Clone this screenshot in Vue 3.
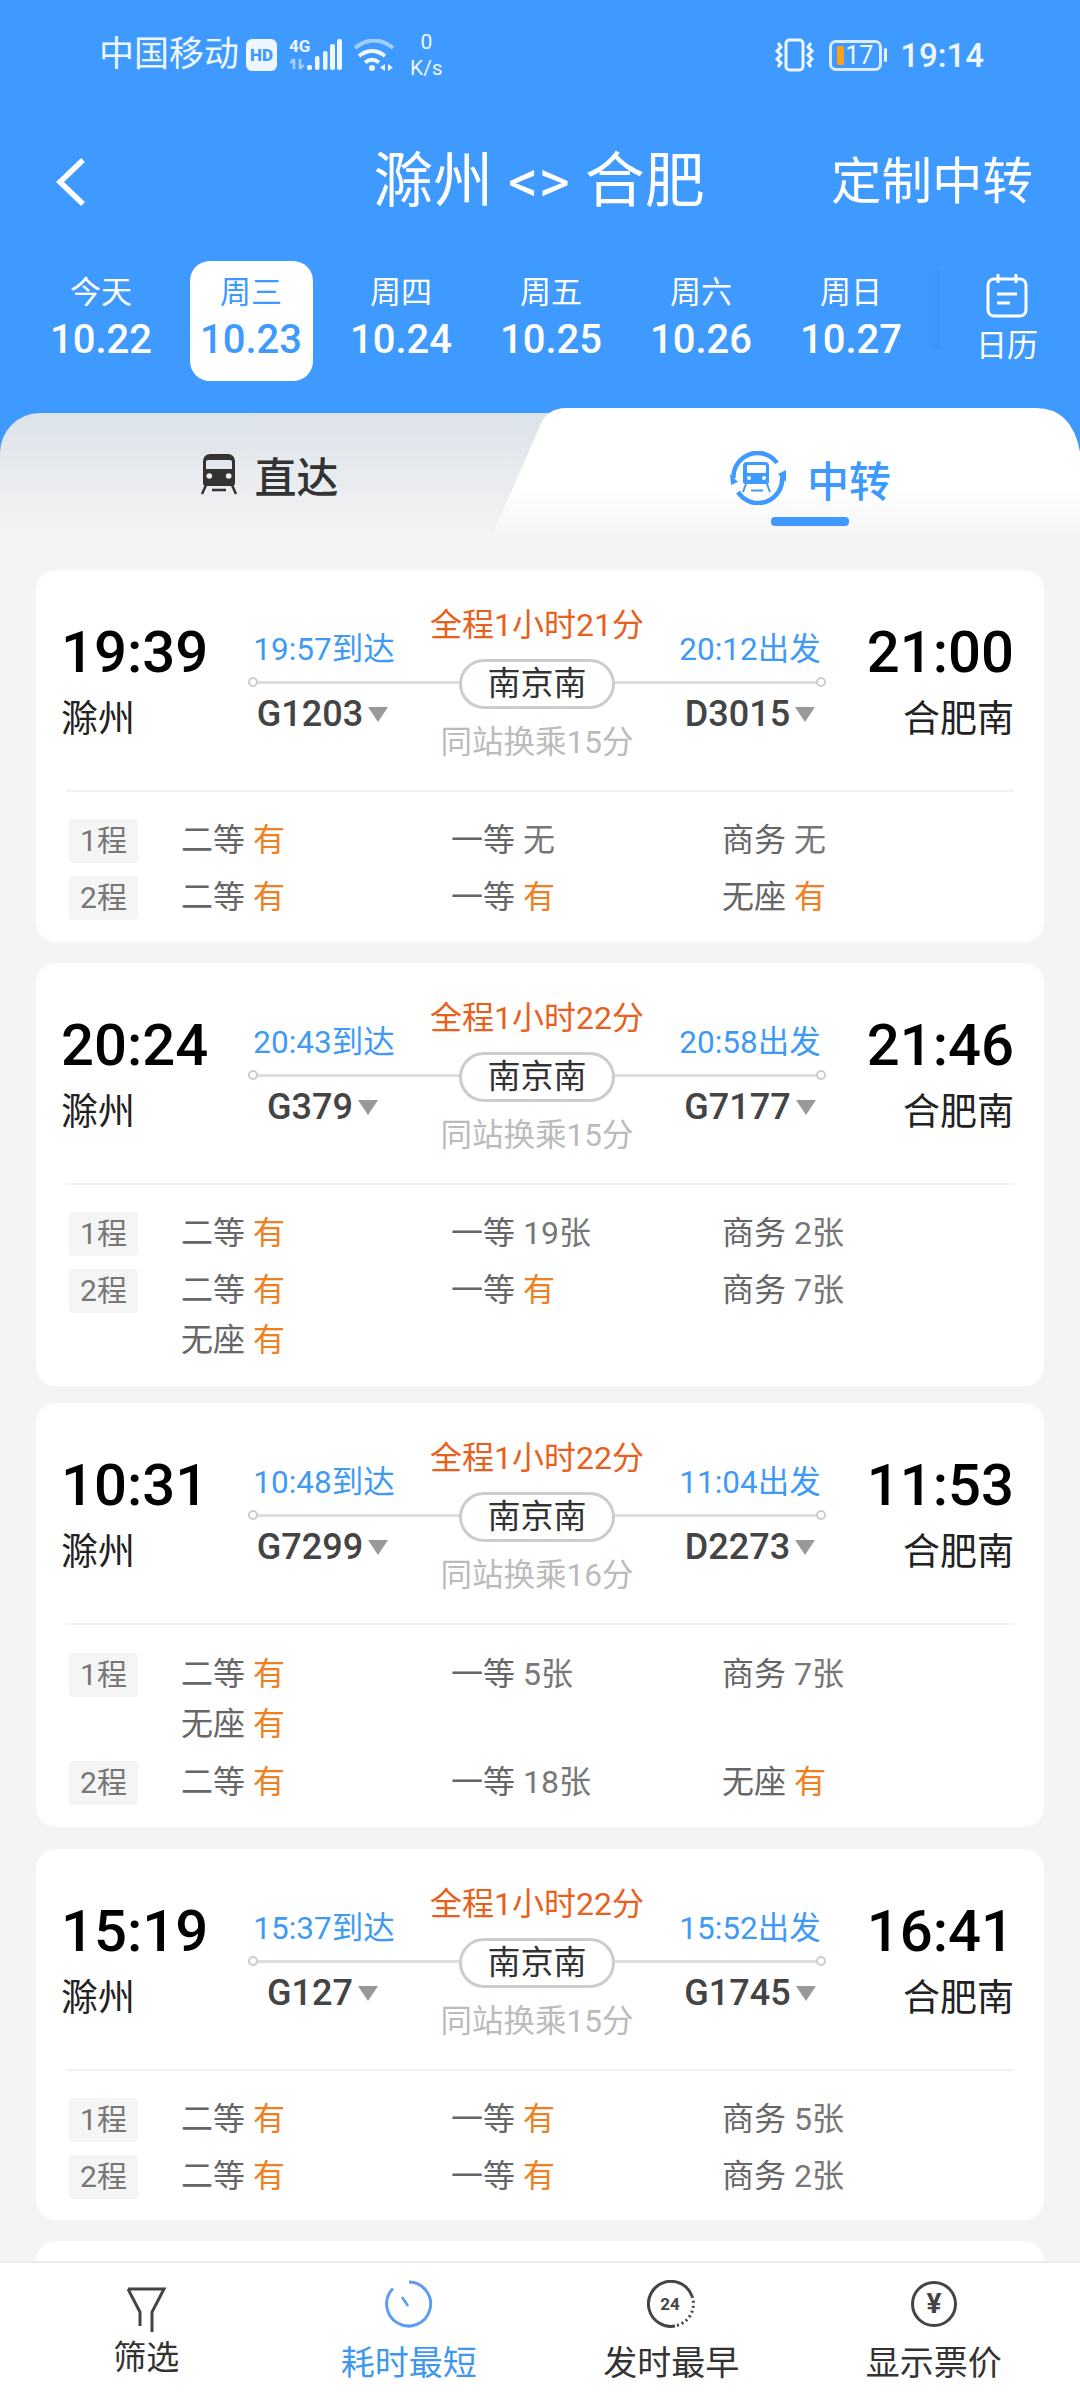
<template>
  <div class="page">
    <header class="top">
      <div class="status">
        <div class="status-left">
          <span class="carrier">中国移动</span>
          <span class="hd">HD</span>
          <svg class="signal" width="54" height="36" viewBox="0 -4 54 36">
            <text x="0" y="13" class="net-text">4G</text>
            <path d="M5 30V20M5 20l-3.500 4M11 20v10M11 30l3.500-4" stroke="#a9d2fe" stroke-width="2.500" fill="none" />
            <rect x="18" y="26" width="5" height="5" rx="2" fill="#eef6ff" />
            <rect x="26" y="17" width="4.500" height="14" rx="2" fill="#eef6ff" />
            <rect x="34" y="12" width="4.500" height="19" rx="2" fill="#eef6ff" />
            <rect x="41" y="5" width="5" height="26" rx="2" fill="#eef6ff" />
            <rect x="48" y="0" width="5" height="31" rx="2" fill="#eef6ff" />
          </svg>
          <svg class="wifi" width="40" height="32" viewBox="0 0 40 32">
            <path d="M1 9Q20 -6 39 9" stroke="#9fcdfe" stroke-width="4" fill="none" />
            <path d="M5 17Q18 7 31 17" stroke="#eef6ff" stroke-width="4" fill="none" />
            <path d="M11 23.500Q18 18 25 23.500" stroke="#eef6ff" stroke-width="4" fill="none" />
            <circle cx="18" cy="29" r="3" fill="#eef6ff" />
            <path d="M31 25v7l-5-3.500zM34 25v7l5-3.500z" fill="#eef6ff" />
          </svg>
          <span class="speed"><b>0</b><i>K/s</i></span>
        </div>
        <div class="status-right">
          <svg width="42" height="34" viewBox="0 0 42 34">
            <rect x="12" y="2" width="17" height="30" rx="3.500" stroke="#eef6ff" stroke-width="3" fill="none" />
            <path d="M4 5l3 4-4 4 4 4-4 4 4 4-3 4M37 5l-3 4 4 4-4 4 4 4-4 4 3 4" stroke="#eef6ff" stroke-width="3" fill="none" />
          </svg>
          <span class="battery"><i class="battery-level"></i><em>17</em></span>
          <span class="battery-nub"></span>
          <span class="clock">19:14</span>
        </div>
      </div>

      <nav class="nav">
        <div>
          <svg class="back" width="32" height="50" viewBox="0 0 32 50">
            <path d="M28 3L5 25l23 22" stroke="#fff" stroke-width="5.500" fill="none" />
          </svg>
        </div>
        <div class="title">滁州 &lt;&gt; 合肥</div>
        <div class="action">定制中转</div>
      </nav>

      <div class="dates">
        <div v-for="d in dates" :key="d.date" class="date" :class="{ 'date--on': d.on }">
          <span class="date-week">{{ d.week }}</span>
          <span class="date-num">{{ d.date }}</span>
        </div>
        <div class="calendar">
          <svg width="44" height="44" viewBox="0 0 44 44">
            <rect x="3" y="5" width="38" height="37" rx="6" stroke="#fff" stroke-width="3" fill="none" />
            <path d="M13 0v9M31 0v9M12 20h20M12 29h13" stroke="#fff" stroke-width="3" fill="none" />
          </svg>
          <span>日历</span>
        </div>
      </div>

      <div class="tabs">
        <div class="tab">
          <svg width="36" height="42" viewBox="0 0 36 42">
            <path d="M9 0h18a7 7 0 0 1 7 7v22a3 3 0 0 1-3 3H5a3 3 0 0 1-3-3V7a7 7 0 0 1 7-7z" fill="#333" />
            <path d="M7 6h22a2 2 0 0 1 2 2v7H5V8a2 2 0 0 1 2-2z" fill="#e4e8ee" />
            <circle cx="8.300" cy="22" r="2.800" fill="#eef1f4" />
            <circle cx="27.700" cy="22" r="2.800" fill="#eef1f4" />
            <path d="M5 31L1 40M31 31l4 9M11 36h14" stroke="#333" stroke-width="2.500" fill="none" />
          </svg>
          <span>直达</span>
        </div>
        <div class="tab-on">
          <div class="tab-on-row">
            <svg width="58" height="54" viewBox="0 0 58 54">
              <path d="M4.500 27A24 24 0 0 1 48 12M53 25A24 24 0 0 1 9 41" stroke="#3e9afe" stroke-width="4.500" fill="none" />
              <path d="M1 23l8 8-7 3zM57 31l-8-8 8-4z" fill="#3e9afe" />
              <path d="M18 11h18a4 4 0 0 1 4 4v16a2 2 0 0 1-2 2H16a2 2 0 0 1-2-2V15a4 4 0 0 1 4-4z" fill="#3e9afe" />
              <rect x="18" y="14" width="19" height="8" rx="1" fill="#fff" />
              <circle cx="20" cy="27" r="2" fill="#fff" />
              <circle cx="35" cy="27" r="2" fill="#fff" />
              <path d="M17 33l-3 8M38 33l3 8M22 39.500h12" stroke="#3e9afe" stroke-width="2" fill="none" />
            </svg>
            <span>中转</span>
          </div>
          <i class="tab-bar"></i>
        </div>
      </div>
    </header>

    <main class="list">
      <section v-for="c in cards" :key="c.dep" class="card">
        <div class="route">
          <div class="side">
            <div class="time">{{ c.dep }}</div>
            <div class="station">滁州</div>
          </div>
          <div class="leg leg--a">
            <div class="leg-text">{{ c.arrive }}</div>
            <div class="leg-line"></div>
            <div class="train">{{ c.trainA }}<i class="caret"></i></div>
          </div>
          <div class="hub">
            <div class="total">{{ c.total }}</div>
            <div class="pill">南京南</div>
            <div class="change">{{ c.change }}</div>
          </div>
          <div class="leg leg--b">
            <div class="leg-text">{{ c.leave }}</div>
            <div class="leg-line"></div>
            <div class="train">{{ c.trainB }}<i class="caret"></i></div>
          </div>
          <div class="side side--end">
            <div class="time">{{ c.arr }}</div>
            <div class="station">合肥南</div>
          </div>
        </div>
        <div class="seats">
          <div v-for="g in c.groups" :key="g.label" class="group">
            <span class="badge">{{ g.label }}</span>
            <div class="seat-grid">
              <span v-for="s in g.seats" :key="s[0]" class="seat">
                {{ s[0] }} <b :class="{ hot: s[1] === '有' }">{{ s[1] }}</b>
              </span>
            </div>
          </div>
        </div>
      </section>
      <section class="card card--cut"></section>
    </main>

    <footer class="bottom">
      <div class="bottom-item bottom-item--filter">
        <svg width="42" height="46" viewBox="0 0 42 46">
          <path d="M3 2h36L27 25v20M3 2l12 23v14" stroke="#444" stroke-width="3" fill="none" />
        </svg>
        <span>筛选</span>
      </div>
      <div class="bottom-item bottom-item--on">
        <svg width="48" height="48" viewBox="0 0 48 48">
          <path d="M24 2a22 22 0 1 1-16 6.500" stroke="#5c9cf2" stroke-width="3" fill="none" />
          <path d="M17 17l6 9" stroke="#5c9cf2" stroke-width="2.500" fill="none" />
        </svg>
        <span>耗时最短</span>
      </div>
      <div class="bottom-item">
        <svg width="48" height="48" viewBox="0 0 48 48">
          <path d="M45 16A22.500 22.500 0 1 0 28 46" stroke="#444" stroke-width="3" fill="none" />
          <path d="M45 16A22.500 22.500 0 0 1 28 46" stroke="#444" stroke-width="3" stroke-dasharray="2 3" fill="none" />
          <text x="23" y="30" text-anchor="middle" class="icon-text">24</text>
        </svg>
        <span>发时最早</span>
      </div>
      <div class="bottom-item">
        <svg width="48" height="48" viewBox="0 0 48 48">
          <circle cx="24" cy="24" r="21.500" stroke="#444" stroke-width="3" fill="none" />
          <text x="24" y="33" text-anchor="middle" class="icon-text icon-text--yen">¥</text>
        </svg>
        <span>显示票价</span>
      </div>
    </footer>
  </div>
</template>

<script setup>
const dates = [
  { week: '今天', date: '10.22' },
  { week: '周三', date: '10.23', on: true },
  { week: '周四', date: '10.24' },
  { week: '周五', date: '10.25' },
  { week: '周六', date: '10.26' },
  { week: '周日', date: '10.27' }
]

const cards = [
  {
    dep: '19:39', arr: '21:00', arrive: '19:57到达', leave: '20:12出发',
    total: '全程1小时21分', change: '同站换乘15分', trainA: 'G1203', trainB: 'D3015',
    groups: [
      { label: '1程', seats: [['二等', '有'], ['一等', '无'], ['商务', '无']] },
      { label: '2程', seats: [['二等', '有'], ['一等', '有'], ['无座', '有']] }
    ]
  },
  {
    dep: '20:24', arr: '21:46', arrive: '20:43到达', leave: '20:58出发',
    total: '全程1小时22分', change: '同站换乘15分', trainA: 'G379', trainB: 'G7177',
    groups: [
      { label: '1程', seats: [['二等', '有'], ['一等', '19张'], ['商务', '2张']] },
      { label: '2程', seats: [['二等', '有'], ['一等', '有'], ['商务', '7张'], ['无座', '有']] }
    ]
  },
  {
    dep: '10:31', arr: '11:53', arrive: '10:48到达', leave: '11:04出发',
    total: '全程1小时22分', change: '同站换乘16分', trainA: 'G7299', trainB: 'D2273',
    groups: [
      { label: '1程', seats: [['二等', '有'], ['一等', '5张'], ['商务', '7张'], ['无座', '有']] },
      { label: '2程', seats: [['二等', '有'], ['一等', '18张'], ['无座', '有']] }
    ]
  },
  {
    dep: '15:19', arr: '16:41', arrive: '15:37到达', leave: '15:52出发',
    total: '全程1小时22分', change: '同站换乘15分', trainA: 'G127', trainB: 'G1745',
    groups: [
      { label: '1程', seats: [['二等', '有'], ['一等', '有'], ['商务', '5张']] },
      { label: '2程', seats: [['二等', '有'], ['一等', '有'], ['商务', '2张']] }
    ]
  }
]
</script>

<style>
html,
body {
  background: #f4f4f4;
}
</style>

<style scoped>
.page {
  display: flex;
  flex-direction: column;
  width: 1080px;
  height: 2400px;
  overflow: hidden;
  background: #f4f4f4;
  font-family: Roboto, "Noto Sans CJK SC", sans-serif;
  color: #333;
}

.top {
  flex: none;
  background: #3e9afe;
  color: #fff;
}
.status {
  display: flex;
  justify-content: space-between;
  align-items: center;
  height: 110px;
  padding: 0 96px 0 99px;
  color: #eef6ff;
}
.status-left,
.status-right {
  display: flex;
  align-items: center;
}
.carrier {
  font-size: 35px;
  line-height: 40px;
}
.hd {
  width: 31px;
  height: 32px;
  margin-left: 7px;
  border-radius: 6px;
  background: #eef6ff;
  color: #3e9afe;
  font-size: 17px;
  font-weight: 900;
  line-height: 32px;
  text-align: center;
}
.signal {
  margin: -4px 0 0 12px;
}
.net-text {
  font-size: 17px;
  font-weight: 700;
  fill: #eef6ff;
}
.wifi {
  margin-left: 11px;
}
.speed {
  display: flex;
  flex-direction: column;
  align-items: center;
  margin-left: 16px;
  font-size: 21px;
  line-height: 26px;
}
.speed b,
.speed i {
  font-style: normal;
  font-weight: 400;
}
.battery {
  display: flex;
  align-items: center;
  width: 53px;
  height: 31px;
  margin-left: 13px;
  padding-left: 5px;
  box-sizing: border-box;
  border: 3px solid #dbeafe;
  border-radius: 7px;
}
.battery-level {
  width: 7px;
  height: 19px;
  border-radius: 2px;
  background: #ff9f1c;
}
.battery em {
  margin-left: 1px;
  font-size: 25px;
  font-style: normal;
  line-height: 25px;
}
.battery-nub {
  width: 3px;
  height: 14px;
  margin-left: 2px;
  border-radius: 2px;
  background: #eef6ff;
}
.clock {
  margin-left: 13px;
  font-size: 33px;
  font-weight: 500;
}

.nav {
  display: grid;
  grid-template-columns: 1fr auto 1fr;
  align-items: center;
  height: 144px;
  padding: 0 47px 0 55px;
}
.back {
  display: block;
}
.title {
  margin-right: 10px;
  font-size: 60px;
  line-height: 70px;
}
.action {
  font-size: 50.500px;
  line-height: 70px;
  text-align: right;
}

.dates {
  display: flex;
  height: 120px;
  padding: 7px 0 0 26px;
}
.date {
  display: flex;
  flex-direction: column;
  align-items: center;
  width: 150px;
  height: 120px;
  box-sizing: border-box;
  padding-top: 11px;
}
.date--on {
  width: 123px;
  margin: 0 13.500px;
  border-radius: 20px;
  background: #fff;
  color: #3e9afe;
}
.date-week {
  font-size: 31px;
  line-height: 42px;
}
.date-num {
  font-size: 40px;
  font-weight: 500;
  line-height: 52px;
}
.calendar {
  position: relative;
  display: flex;
  flex-direction: column;
  align-items: center;
  width: 146px;
  margin-left: 4px;
  padding: 13px 0 0 8px;
  box-sizing: border-box;
  font-size: 31px;
  line-height: 42px;
}
.calendar::before {
  content: "";
  position: absolute;
  top: 9px;
  left: -4px;
  width: 14px;
  height: 80px;
  background: linear-gradient(90deg, rgba(40, 110, 190, 0), rgba(40, 110, 190, 0.12));
}
.calendar span {
  margin-top: 7px;
}

.tabs {
  display: flex;
  height: 132px;
  margin-top: 27px;
  color: #333;
}
.tab {
  display: flex;
  justify-content: center;
  align-items: center;
  gap: 17px;
  flex: none;
  width: 560px;
  height: 127px;
  margin-top: 5px;
  padding: 0 20px 4px 0;
  box-sizing: border-box;
  border-radius: 40px 0 0 0;
  background: linear-gradient(180deg, #dde3eb, #f4f4f4);
  font-size: 42px;
  font-weight: 500;
}
.tab-on {
  display: flex;
  flex-direction: column;
  align-items: center;
  flex: none;
  width: 590px;
  margin-left: -70px;
  padding: 43px 0 0 50px;
  box-sizing: border-box;
  background: linear-gradient(180deg, #fff 60%, #f4f4f4);
  clip-path: path("M0 132L50 18Q57 0 76 0H546Q582 0 590 44V132Z");
  color: #3e9afe;
  font-size: 42px;
  font-weight: 500;
}
.tab-on-row {
  display: flex;
  align-items: center;
  gap: 20px;
  height: 54px;
}
.tab-bar {
  width: 78px;
  height: 9px;
  margin-top: 12px;
  border-radius: 4px;
  background: #3e9afe;
}

.list {
  flex: 1;
  min-height: 0;
  overflow: hidden;
  padding: 30px 36px 0;
}
.card {
  margin-bottom: 21px;
  border-radius: 20px;
  background: #fff;
}
.card:nth-child(2) {
  margin-bottom: 17px;
}
.card:nth-child(3) {
  margin-bottom: 22px;
}
.card--cut {
  height: 60px;
}
.route {
  display: flex;
  height: 220px;
  margin: 0 31px 0 25px;
}
.side {
  flex: none;
  width: 187px;
  padding-top: 47px;
}
.side--end {
  width: 188px;
  text-align: right;
}
.time {
  color: #000;
  font-size: 58px;
  font-weight: 500;
  line-height: 70px;
}
.station {
  margin-top: 11px;
  color: #222;
  font-size: 37px;
  line-height: 44px;
}
.leg {
  flex: none;
  width: 211px;
  padding-top: 60px;
  text-align: center;
}
.leg--a .leg-text {
  width: 152px;
}
.leg--a .train {
  width: 149px;
}
.leg--b .leg-text,
.leg--b .train {
  width: 146px;
  margin-left: 62px;
}
.leg-text {
  color: #3f9af5;
  font-size: 31.500px;
  line-height: 40px;
  white-space: nowrap;
}
.leg-line {
  position: relative;
  height: 3px;
  margin-top: 11px;
  background: #ddd;
}
.leg-line::before {
  content: "";
  position: absolute;
  top: -4px;
  left: 0;
  width: 10px;
  height: 10px;
  box-sizing: border-box;
  border: 2px solid #ccc;
  border-radius: 50%;
  background: #fff;
}
.leg--b .leg-line::before {
  left: auto;
  right: 0;
}
.train {
  margin-top: 8px;
  color: #444;
  font-size: 36px;
  font-weight: 500;
  line-height: 44px;
  white-space: nowrap;
}
.caret {
  display: inline-block;
  margin-left: 5px;
  vertical-align: 4px;
  border-top: 15px solid #999;
  border-left: 10px solid transparent;
  border-right: 10px solid transparent;
}
.hub {
  flex: none;
  width: 156px;
  padding-top: 35px;
  text-align: center;
}
.total {
  margin: 0 -50px;
  color: #e8601c;
  font-size: 32px;
  line-height: 40px;
  white-space: nowrap;
}
.pill {
  height: 50px;
  margin-top: 14px;
  box-sizing: border-box;
  border: 3px solid #ccc;
  border-radius: 25px;
  color: #333;
  font-size: 33px;
  line-height: 44px;
}
.change {
  margin: 14px -50px 0;
  color: #bbb;
  font-size: 31.500px;
  line-height: 40px;
  white-space: nowrap;
}
.seats {
  display: flex;
  flex-direction: column;
  gap: 13px;
  margin: 0 30px;
  padding: 27px 0 22px 3px;
  border-top: 2px solid #f1f1f1;
}
.card:nth-child(2) .seats {
  padding-bottom: 23px;
}
.card:nth-child(3) .seats {
  gap: 14px;
  padding-top: 28px;
}
.card:nth-child(4) .seats {
  padding-bottom: 21px;
}
.group {
  display: flex;
  align-items: flex-start;
  gap: 43px;
}
.badge {
  flex: none;
  width: 69px;
  height: 44px;
  border-radius: 4px;
  background: #f5f5f5;
  color: #777;
  font-size: 30px;
  line-height: 44px;
  text-align: center;
}
.seat-grid {
  display: grid;
  grid-template-columns: 270px 271px 1fr;
  row-gap: 8px;
  flex: 1;
  padding-bottom: 2px;
}
.seat {
  color: #666;
  font-size: 32px;
  line-height: 42px;
}
.seat b {
  color: #777;
  font-weight: 400;
}
.seat b.hot {
  color: #f0801f;
}

.bottom {
  flex: none;
  display: grid;
  grid-template-columns: repeat(4, 262.500px);
  justify-content: center;
  height: 139px;
  margin-top: -60px;
  box-sizing: border-box;
  padding-top: 17px;
  position: relative;
  border-top: 2px solid #ececec;
  background: #fff;
  color: #333;
  font-size: 34px;
}
.bottom-item {
  display: flex;
  flex-direction: column;
  align-items: center;
  line-height: 44px;
}
.bottom-item svg {
  display: block;
}
.bottom-item span {
  margin-top: 13px;
}
.bottom-item--filter svg {
  margin-top: 7px;
}
.bottom-item--filter span {
  margin-top: 3px;
  font-size: 33px;
}
.bottom-item--on {
  color: #3f97ee;
}
.icon-text {
  font-size: 17px;
  font-weight: 700;
  fill: #444;
}
.icon-text--yen {
  font-size: 28px;
}
</style>
